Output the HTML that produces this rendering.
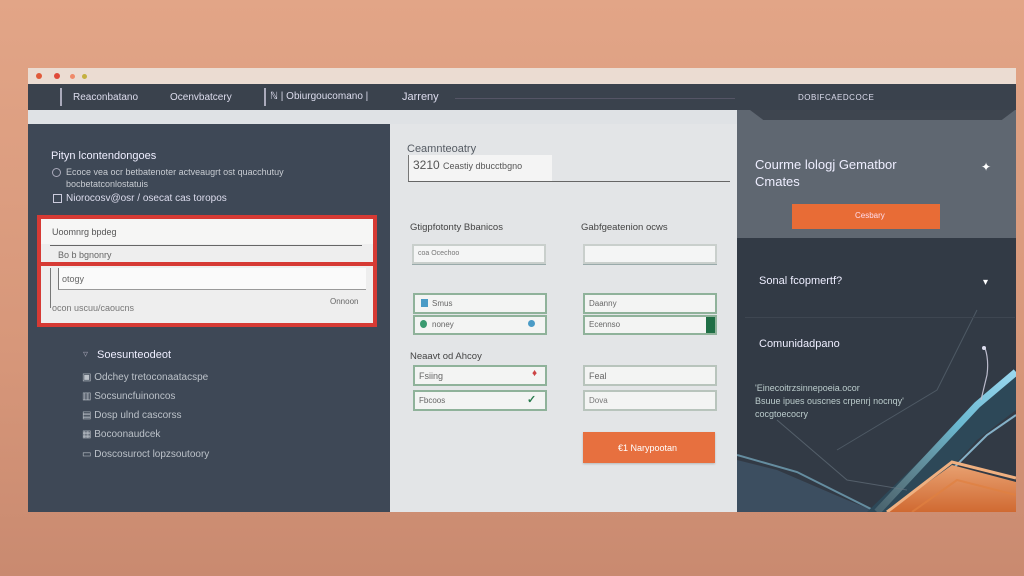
<!DOCTYPE html>
<html><head><meta charset="utf-8"><style>
*{margin:0;padding:0;box-sizing:border-box}
body{width:1024px;height:576px;overflow:hidden;background:linear-gradient(180deg,#e2a587 0%,#d7977a 60%,#c98a70 100%);font-family:"Liberation Sans",sans-serif;position:relative}
.a{position:absolute}
.t{position:absolute;white-space:nowrap;font-size:10px}
.in{position:absolute;background:#f4f5f5;border:2px solid #c9cfcc;box-shadow:0 1px 0 #9aa}
.gin{position:absolute;background:#f3f4f3;border:2px solid #8fb29a}
</style></head><body>
<div class="a" style="left:28px;top:68px;width:988px;height:16px;background:#ebdcd2"></div>
<div class="a" style="left:36px;top:73px;width:6px;height:6px;border-radius:50%;background:#e05a3a"></div>
<div class="a" style="left:54px;top:73px;width:6px;height:6px;border-radius:50%;background:#e04a3a"></div>
<div class="a" style="left:70px;top:74px;width:5px;height:5px;border-radius:50%;background:#ef8a6a"></div>
<div class="a" style="left:82px;top:74px;width:5px;height:5px;border-radius:50%;background:#c4b040"></div>
<div class="a" style="left:28px;top:84px;width:988px;height:27px;background:#3a424d"></div>
<div class="a" style="left:60px;top:88px;width:2px;height:18px;background:#aab"></div>
<div class="t" style="left:73px;top:92px;color:#dde;font-size:10px">Reaconbatano</div>
<div class="t" style="left:170px;top:92px;color:#dde">Ocenvbatcery</div>
<div class="a" style="left:264px;top:88px;width:2px;height:18px;background:#aab"></div>
<div class="t" style="left:270px;top:91px;color:#dde">ℕ | Obiurgoucomano |</div>
<div class="t" style="left:402px;top:91px;color:#dde;font-size:11px">Jarreny</div>
<div class="a" style="left:455px;top:98px;width:280px;height:1px;background:#556"></div>
<div class="t" style="left:798px;top:93px;color:#dde;font-size:8px;letter-spacing:.5px">DOBIFCAEDCOCE</div>
<div class="a" style="left:28px;top:110px;width:709px;height:14px;background:#dfe2e5"></div>
<div class="a" style="left:28px;top:124px;width:362px;height:388px;background:#3e4856"></div>
<div class="t" style="left:51px;top:150px;color:#eef;font-size:11px">Pityn lcontendongoes</div>
<div class="a" style="left:52px;top:168px;width:9px;height:9px;border:1px solid #aab;border-radius:50%"></div>
<div class="t" style="left:66px;top:167px;color:#c8ccd2;font-size:9px">Ecoce vea ocr betbatenoter actveaugrt ost quacchutuy</div>
<div class="t" style="left:66px;top:179px;color:#c8ccd2;font-size:9px">bocbetatconlostatuis</div>
<div class="a" style="left:53px;top:194px;width:9px;height:9px;border:1px solid #ccd"></div>
<div class="t" style="left:66px;top:193px;color:#dde;font-size:10px">Niorocosv@osr / osecat cas toropos</div>
<div class="a" style="left:37px;top:215px;width:340px;height:112px;border:4px solid #d63a34;background:#eeeeee"></div>
<div class="a" style="left:41px;top:219px;width:332px;height:25px;background:#f6f6f5"></div>
<div class="t" style="left:52px;top:227px;color:#555;font-size:9px">Uoomnrg bpdeg</div>
<div class="a" style="left:50px;top:245px;width:312px;height:1px;background:#666"></div>
<div class="t" style="left:58px;top:250px;color:#666;font-size:9px">Bo b bgnonry</div>
<div class="a" style="left:40px;top:262px;width:334px;height:4px;background:#d63a34"></div>
<div class="a" style="left:58px;top:268px;width:308px;height:22px;background:#fafafa;border-left:1px solid #777;border-bottom:1px solid #999"></div>
<div class="t" style="left:62px;top:274px;color:#666;font-size:9px">otogy</div>
<div class="a" style="left:50px;top:268px;width:1px;height:40px;background:#777"></div>
<div class="t" style="left:52px;top:303px;color:#777;font-size:9px">ocon uscuu/caoucns</div>
<div class="t" style="left:330px;top:297px;color:#666;font-size:8px">Onnoon</div>
<div class="t" style="left:83px;top:349px;color:#99a;font-size:10px">▿</div>
<div class="t" style="left:97px;top:349px;color:#eef;font-size:11px">Soesunteodeot</div>
<div class="t" style="left:82px;top:372px;color:#bcc2c9;font-size:10px">▣ Odchey tretoconaatacspe</div>
<div class="t" style="left:82px;top:391px;color:#bcc2c9;font-size:10px">▥ Socsuncfuinoncos</div>
<div class="t" style="left:82px;top:410px;color:#bcc2c9;font-size:10px">▤ Dosp ulnd cascorss</div>
<div class="t" style="left:82px;top:429px;color:#bcc2c9;font-size:10px">▦ Bocoonaudcek</div>
<div class="t" style="left:82px;top:449px;color:#bcc2c9;font-size:10px">▭ Doscosuroct lopzsoutoory</div>
<div class="a" style="left:390px;top:124px;width:347px;height:388px;background:#e3e5e7"></div>
<div class="t" style="left:407px;top:143px;color:#555b63;font-size:11px">Ceamnteoatry</div>
<div class="a" style="left:408px;top:155px;width:144px;height:26px;background:#f4f4f4;border-left:1px solid #777"></div>
<div class="t" style="left:413px;top:158px;color:#555;font-size:12px">3210 <span style="font-size:9px">Ceastiy dbucctbgno</span></div>
<div class="a" style="left:408px;top:181px;width:322px;height:1px;background:#666"></div>
<div class="t" style="left:410px;top:222px;color:#444;font-size:9.5px">Gtigpfotonty Bbanicos</div>
<div class="t" style="left:581px;top:222px;color:#444;font-size:9.5px">Gabfgeatenion ocws</div>
<div class="in" style="left:412px;top:244px;width:134px;height:20px"></div>
<div class="t" style="left:418px;top:250px;color:#777;font-size:7px">coa Ocechoo</div>
<div class="in" style="left:583px;top:244px;width:134px;height:20px"></div>
<div class="gin" style="left:413px;top:293px;width:134px;height:21px"></div>
<div class="a" style="left:421px;top:299px;width:7px;height:8px;background:#4a9bc6"></div>
<div class="t" style="left:432px;top:299px;color:#666;font-size:8px">Smus</div>
<div class="gin" style="left:413px;top:315px;width:134px;height:20px"></div>
<div class="a" style="left:420px;top:320px;width:7px;height:8px;border-radius:50%;background:#3a9a70"></div>
<div class="t" style="left:432px;top:320px;color:#666;font-size:8px">noney</div>
<div class="a" style="left:528px;top:320px;width:7px;height:7px;border-radius:50%;background:#4a9bc6"></div>
<div class="gin" style="left:583px;top:293px;width:134px;height:21px"></div>
<div class="t" style="left:589px;top:299px;color:#666;font-size:8px">Daanny</div>
<div class="gin" style="left:583px;top:315px;width:134px;height:20px"></div>
<div class="t" style="left:589px;top:320px;color:#666;font-size:8px">Ecennso</div>
<div class="a" style="left:706px;top:317px;width:9px;height:16px;background:#1f6e45"></div>
<div class="t" style="left:410px;top:351px;color:#444;font-size:9.5px">Neaavt od Ahcoy</div>
<div class="gin" style="left:413px;top:365px;width:134px;height:21px"></div>
<div class="t" style="left:419px;top:371px;color:#666;font-size:9px">Fsiing</div>
<div class="t" style="left:532px;top:368px;color:#c44;font-size:10px">♦</div>
<div class="gin" style="left:413px;top:390px;width:134px;height:21px"></div>
<div class="t" style="left:419px;top:396px;color:#666;font-size:8px">Fbcoos</div>
<div class="t" style="left:527px;top:393px;color:#287a4c;font-size:11px;font-weight:bold">✓</div>
<div class="gin" style="left:583px;top:365px;width:134px;height:21px;border-color:#b8c4bc"></div>
<div class="t" style="left:589px;top:371px;color:#666;font-size:9px">Feal</div>
<div class="gin" style="left:583px;top:390px;width:134px;height:21px;border-color:#b8c4bc"></div>
<div class="t" style="left:589px;top:396px;color:#777;font-size:8px">Dova</div>
<div class="a" style="left:583px;top:432px;width:132px;height:31px;background:#e7703f;box-shadow:0 1px 2px rgba(0,0,0,.2)"></div>
<div class="t" style="left:618px;top:443px;color:#fff;font-size:9px">€1 Narypootan</div>
<div class="a" style="left:737px;top:110px;width:279px;height:402px;background:#323a45;overflow:hidden">
<svg width="279" height="402" style="position:absolute;left:0;top:0">
<defs>
<linearGradient id="o" x1="0" y1="0" x2="0" y2="1"><stop offset="0" stop-color="#e8a070"/><stop offset="1" stop-color="#d06a32"/></linearGradient>
<linearGradient id="b" x1="0" y1="1" x2="1" y2="0"><stop offset="0" stop-color="#8aa0a0" stop-opacity=".3"/><stop offset=".6" stop-color="#6ab8d0"/><stop offset="1" stop-color="#9ad8f0"/></linearGradient>
</defs>
<path d="M0 350 L40 360 L110 390 L140 402 L0 402Z" fill="#3e5466" opacity=".8"/>
<path d="M0 345 L60 362 L140 402" stroke="#7ab0c8" stroke-width="2" fill="none" opacity=".7"/>
<path d="M130 402 L235 300 L279 265 L279 300 L240 330 L175 402Z" fill="#2d4858"/>
<path d="M140 402 L240 295 L279 262" stroke="url(#b)" stroke-width="7" fill="none"/>
<path d="M172 402 L250 325 L279 305" stroke="#9ad0e8" stroke-width="2" fill="none" opacity=".8"/>
<path d="M150 402 L215 355 L279 372 L279 402Z" fill="url(#o)"/>
<path d="M150 402 L215 352 L279 368" stroke="#f0b080" stroke-width="3" fill="none"/>
<path d="M175 402 L220 370 L279 385" stroke="#e08040" stroke-width="2" fill="none" opacity=".7"/>
<path d="M40 310 L110 370 L170 380" stroke="#6a7884" stroke-width="1" fill="none" opacity=".6"/>
<path d="M100 340 L200 280 L240 200" stroke="#6a7884" stroke-width="1" fill="none" opacity=".5"/>
<path d="M248 238 Q252 250 250 265 L244 290" stroke="#bbc" stroke-width="1.2" fill="none"/>
<circle cx="247" cy="238" r="2" fill="#dde"/>
</svg>
</div>
<div class="a" style="left:737px;top:110px;width:279px;height:128px;background:#5f6771"></div>
<div class="a" style="left:750px;top:110px;width:265px;height:10px;background:#3e454f;clip-path:polygon(0 0,100% 0,95% 100%,5% 100%)"></div>
<div class="t" style="left:755px;top:157px;color:#eef;font-size:13px">Courme lologj Gematbor</div>
<div class="t" style="left:755px;top:174px;color:#eef;font-size:13px">Cmates</div>
<div class="t" style="left:981px;top:160px;color:#fff;font-size:12px">✦</div>
<div class="a" style="left:792px;top:204px;width:148px;height:25px;background:#e86c36"></div>
<div class="t" style="left:855px;top:211px;color:#fde;font-size:8px">Cesbary</div>
<div class="t" style="left:759px;top:275px;color:#eef;font-size:11px">Sonal fcopmertf?</div>
<div class="t" style="left:983px;top:277px;color:#fff;font-size:10px">▾</div>
<div class="a" style="left:745px;top:317px;width:270px;height:1px;background:#3e4651"></div>
<div class="t" style="left:759px;top:338px;color:#eef;font-size:11px">Comunidadpano</div>
<div class="t" style="left:755px;top:383px;color:#bcc;font-size:9px">'Einecoitrzsinnepoeia.ocor</div>
<div class="t" style="left:755px;top:396px;color:#bcc;font-size:9px">Bsuue ipues ouscnes crpenrj nocnqy'</div>
<div class="t" style="left:755px;top:409px;color:#bcc;font-size:9px">cocgtoecocry</div>
</body></html>
